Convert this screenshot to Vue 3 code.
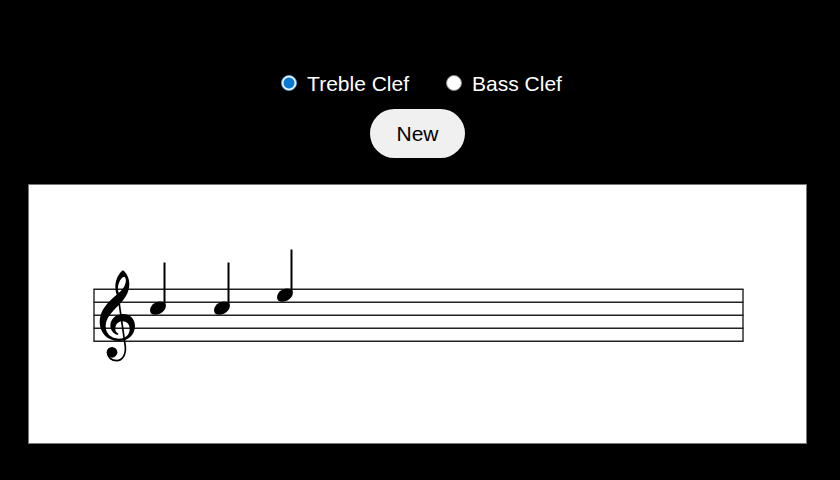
<script setup>
import { ref } from 'vue'

const clef = ref('treble')
const lines = [289, 302, 315, 328, 341]
const notes = [
  { x: 158, y: 308 },
  { x: 222, y: 308 },
  { x: 285, y: 295 },
]
</script>

<template>
  <main class="page">
    <div class="choices" role="radiogroup" aria-label="Clef">
      <label class="choice">
        <input v-model="clef" class="radio" type="radio" name="clef" value="treble" />
        <span>Treble Clef</span>
      </label>
      <label class="choice">
        <input v-model="clef" class="radio" type="radio" name="clef" value="bass" />
        <span>Bass Clef</span>
      </label>
    </div>
    <button class="new" type="button">New</button>
    <section class="sheet">
      <svg class="score" viewBox="29 185 777 258" role="img" aria-label="Staff">
        <g stroke="#222" stroke-width="1.4" fill="none">
          <path v-for="y in lines" :key="y" :d="`M93.5 ${y + 0.3}H743.5`" />
          <path d="M94 289V341.5M743 289V341.5" />
        </g>
        <g transform="translate(85 260) scale(.33333)">
          <path
            fill-rule="evenodd"
            d="M114 31C103 38 91 58 91 80C91 90 93 98 95 104C69 126 44 150 44 186C44 219 68 243 102 243C130 243 150 224 150 197C150 176 134 162 114 162C92 162 76 178 76 197C76 210 85 221 99 225L100 221C93 217 90 210 91 203C93 191 101 184 112 184C126 184 134 193 134 207C134 225 121 236 102 236C78 236 62 221 62 199C62 176 79 157 101 136C119 117 133 98 133 72C133 54 124 38 114 31ZM118 50C123 54 124 62 121 71C118 82 110 91 101 99C98 88 98 78 102 68C106 58 111 51 118 50Z"
          />
          <path
            d="M98 98L121 260C123 285 112 302 95 302C80 302 68 292 68 280"
            fill="none"
            stroke="#000"
            stroke-width="5"
          />
          <circle cx="81" cy="277" r="16" />
        </g>
        <g v-for="(n, i) in notes" :key="i" :transform="`translate(${n.x} ${n.y})`">
          <path
            d="M-8 2.500C-8 -2 -3.500 -6.500 2 -6.500C5.800 -6.500 7.800 -4.800 7.800 -2C7.800 2.500 2.500 6.800 -2.800 6.800C-6 6.800 -8 5.200 -8 2.500Z"
          />
          <path d="M6.500 -1.500V-45.500" stroke="#000" stroke-width="2" />
        </g>
      </svg>
    </section>
  </main>
</template>

<style>
body {
  margin: 0;
  background: #000;
}
</style>

<style scoped>
.page {
  display: flex;
  flex-direction: column;
  align-items: center;
  padding: 72px 33px 36px 28px;
  background: #000;
  color: #fff;
  font: 21px/24px "Liberation Sans", Arial, sans-serif;
}
.choices {
  display: flex;
  gap: 37px;
  padding-left: 8px;
}
.choice {
  display: flex;
  align-items: center;
  gap: 10px;
}
.radio {
  appearance: none;
  box-sizing: border-box;
  width: 16px;
  height: 16px;
  margin: 0 0 2px;
  border: 1px solid #888;
  border-radius: 50%;
  background: #fff;
}
.radio:checked {
  border-color: #5aa9e6;
  background: radial-gradient(circle, #0878d0 5px, #fff 6px);
}
.new {
  margin: 13px 0 26px;
  padding: 13px 26px 12px;
  border: 0;
  border-radius: 25px;
  background: #f0f0f0;
  color: #000;
  font: inherit;
}
.sheet {
  box-sizing: border-box;
  width: 100%;
  border: 1px solid #777;
  background: #fff;
}
.score {
  display: block;
  width: 100%;
}
</style>
